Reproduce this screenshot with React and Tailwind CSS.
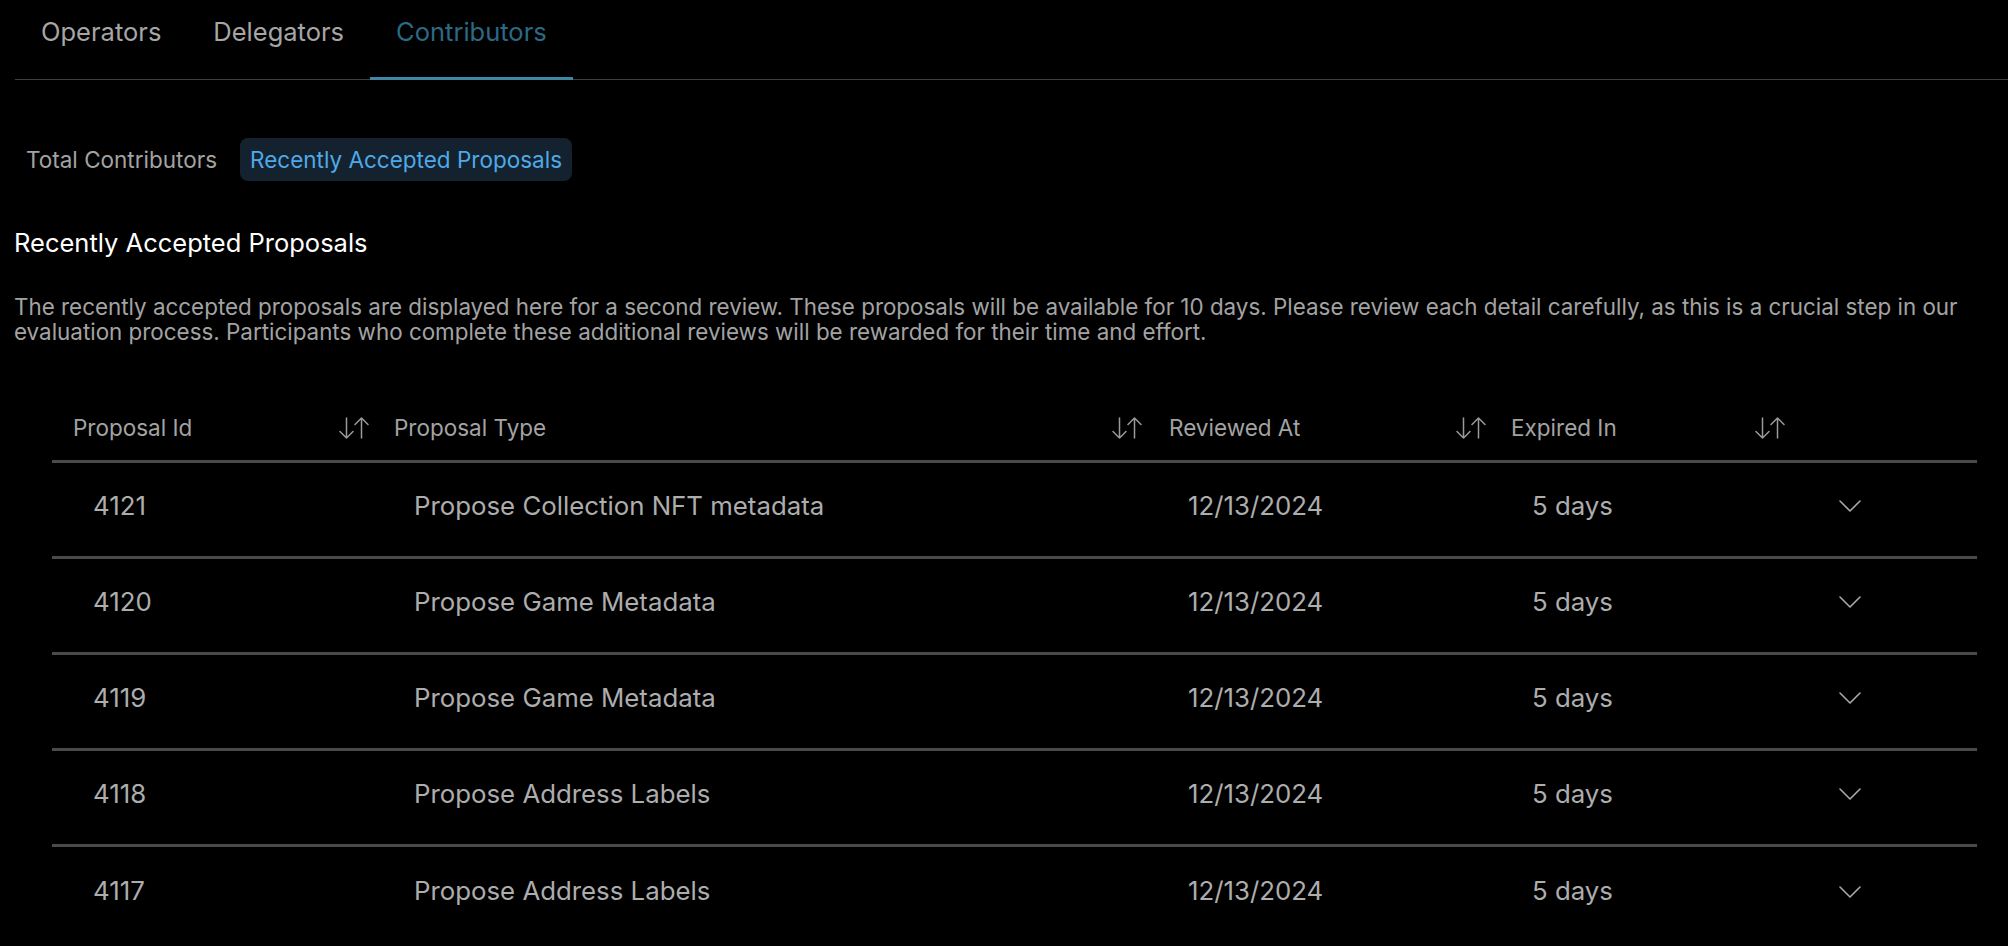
const tabs = ['Operators', 'Delegators', 'Contributors'];

const rows = [
  { id: '4121', type: 'Propose Collection NFT metadata', reviewed: '12/13/2024', expires: '5 days' },
  { id: '4120', type: 'Propose Game Metadata', reviewed: '12/13/2024', expires: '5 days' },
  { id: '4119', type: 'Propose Game Metadata', reviewed: '12/13/2024', expires: '5 days' },
  { id: '4118', type: 'Propose Address Labels', reviewed: '12/13/2024', expires: '5 days' },
  { id: '4117', type: 'Propose Address Labels', reviewed: '12/13/2024', expires: '5 days' },
];

const columns = [
  { label: 'Proposal Id', head: 'w-[329px] pl-[21px] pr-[12px]', cell: 'w-[329px] pl-[41px]' },
  { label: 'Proposal Type', head: 'w-[773px] pl-[13px] pr-[12px]', cell: 'w-[773px] pl-[33px]' },
  { label: 'Reviewed At', head: 'w-[344px] pl-[15px] pr-[12px]', cell: 'w-[344px] pl-[34px]' },
  { label: 'Expired In', head: 'w-[299px] pl-[13px] pr-[12px]', cell: 'w-[299px] pl-[34px]' },
];

// down arrow on the left, up arrow on the right
const SortIcon = () => (
  <svg width="30" height="22" viewBox="0 0 30 22" fill="none" stroke="#9a9a9a" strokeWidth="1.5" strokeLinecap="round" strokeLinejoin="round">
    <path d="M7.5 1V21M1 14.5L7.5 21L14 14.5" />
    <path d="M22.5 21V1M16 7.5L22.5 1L29 7.5" />
  </svg>
);

const Chevron = () => (
  <svg width="22" height="12" viewBox="0 0 22 12" fill="none" stroke="#a8a8a8" strokeWidth="1.6" strokeLinecap="round" strokeLinejoin="round">
    <path d="M1 1L11 11L21 1" />
  </svg>
);

const App = () => {
  return (
    <div className="min-h-screen bg-black font-['Inter',sans-serif] text-[#a3a3a3]">
      {/* Top tabs */}
      <div className="ml-[15px] flex border-b border-[#3f3f3f]">
        {tabs.map((tab) => {
          const isActive = tab === 'Contributors';
          return (
            <div
              key={tab}
              className={`-mb-px px-[26px] pt-[14px] pb-[27px] text-[25.5px] leading-[36px] border-b-[3px]
                ${isActive ? 'text-[#2b6a85] border-[#3e88a6]' : 'text-[#a6a6a6] border-transparent'}`}
            >
              {tab}
            </div>
          );
        })}
      </div>

      {/* Sub tabs */}
      <div className="mt-[58px] ml-[26px] flex items-center gap-[23px] text-[22.5px] leading-[27px]">
        <span className="text-[#a3a3a3]">Total Contributors</span>
        <span className="rounded-[8px] bg-[#13222e] px-[10px] py-[8px] text-[#4fa9e8]">
          Recently Accepted Proposals
        </span>
      </div>

      {/* Intro */}
      <div className="px-[14px]">
        <h2 className="mt-[46px] text-[25.5px] leading-[32px] text-white">Recently Accepted Proposals</h2>
        <p className="mt-[35px] text-[22.4px] leading-[25px] text-[#a3a3a3]">
          The recently accepted proposals are displayed here for a second review. These proposals will be available for 10 days. Please review each detail carefully, as this is a crucial step in our evaluation process. Participants who complete these additional reviews will be rewarded for their time and effort.
        </p>
      </div>

      {/* Table */}
      <div className="mt-[51px] ml-[52px] mr-[31px]">
        <div className="flex h-[68px] items-center border-b-[3px] border-[#4a4a4a] text-[22.5px] text-[#a3a3a3]">
          {columns.map((col) => (
            <div key={col.label} className={`${col.head} flex items-center justify-between`}>
              <span>{col.label}</span>
              <SortIcon />
            </div>
          ))}
        </div>
        {rows.map((row) => (
          <div key={row.id} className="flex h-[96px] items-center border-b-[3px] border-[#4a4a4a] pb-[7px] text-[25.8px] text-[#adadad] last:border-b-0">
            <div className={columns[0].cell}>{row.id}</div>
            <div className={columns[1].cell}>{row.type}</div>
            <div className={columns[2].cell}>{row.reviewed}</div>
            <div className={columns[3].cell}>{row.expires}</div>
            <div className="flex pl-[42px]">
              <Chevron />
            </div>
          </div>
        ))}
      </div>
    </div>
  );
};

export default App;
